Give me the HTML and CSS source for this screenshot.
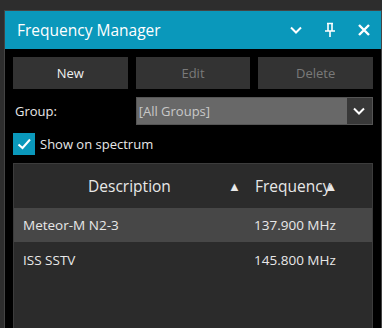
FILE: index.html
```html
<!DOCTYPE html>
<html lang="en">

<head>
    <meta charset="UTF-8">
    <title>Frequency Manager</title>
    <link rel="stylesheet" href="styles.css">
</head>

<body>
    <div class="panel">
        <div class="titlebar">
            <span class="title">Frequency Manager</span>
            <div class="title-icons">
                <svg width="14" height="14" viewBox="0 0 14 14"><path d="M2 4.5 L7 9.5 L12 4.5" fill="none" stroke="#fff" stroke-width="2"/></svg>
                <svg width="14" height="16" viewBox="0 0 14 16"><path d="M4 1.5 H10 M5 1.5 V9 M9 1.5 V9 M2 9 H12 M7 9 V15" fill="none" stroke="#fff" stroke-width="1.6"/></svg>
                <svg width="14" height="14" viewBox="0 0 14 14"><path d="M2 2 L12 12 M12 2 L2 12" fill="none" stroke="#fff" stroke-width="2.4"/></svg>
            </div>
        </div>
        <div class="content">
            <div class="grid">
                <button class="btn">New</button>
                <button class="btn" disabled>Edit</button>
                <button class="btn" disabled>Delete</button>

                <label class="group-label">Group:</label>
                <div class="select">
                    <span class="select-value">[All Groups]</span>
                    <span class="select-arrow">
                        <svg width="14" height="14" viewBox="0 0 14 14"><path d="M2 4.5 L7 9.5 L12 4.5" fill="none" stroke="#fff" stroke-width="2"/></svg>
                    </span>
                </div>
            </div>

            <div class="check-row">
                <span class="checkbox">
                    <svg width="18" height="18" viewBox="0 0 18 18"><path d="M3.5 9.5 L7.5 13 L15 4.5" fill="none" stroke="#fff" stroke-width="2"/></svg>
                </span>
                <span>Show on spectrum</span>
            </div>

            <div class="list">
                <div class="list-head">
                    <div class="col-desc">Description</div>
                    <div class="sort">&#9650;</div>
                    <div class="col-freq">Frequency<span class="sort2">&#9650;</span></div>
                </div>
                <div class="list-row selected">
                    <div class="cell-desc">Meteor-M N2-3</div>
                    <div class="cell-freq">137.900 MHz</div>
                </div>
                <div class="list-row">
                    <div class="cell-desc">ISS SSTV</div>
                    <div class="cell-freq">145.800 MHz</div>
                </div>
            </div>
        </div>
    </div>
</body>

</html>
```

FILE: styles.css
```css
* {
    box-sizing: border-box;
}

body {
    font-family: "Open Sans", "Noto Sans", sans-serif;
    margin: 0;
    padding: 10px 0 0 4px;
    background-color: #2d2d2d;
    color: #e8e8e8;
    height: 328px;
    overflow: hidden;
}

.panel {
    width: 378px;
    height: 318px;
    border: 1px solid #444;
    border-bottom: none;
    background-color: #000;
    display: flex;
    flex-direction: column;
}

.titlebar {
    height: 38px;
    background-color: #0a98bb;
    display: flex;
    align-items: center;
    padding: 0 10px 0 12px;
    color: #fff;
}

.title {
    font-size: 15.5px;
    flex: 1;
}

.title-icons {
    display: flex;
    align-items: center;
    gap: 20px;
}

.title-icons svg {
    display: block;
}

.content {
    flex: 1;
    padding: 8px 8px 0 8px;
    display: flex;
    flex-direction: column;
    gap: 8px;
}

.grid {
    display: grid;
    grid-template-columns: 1fr 1fr 1fr;
    grid-template-rows: 32px 28px;
    gap: 8px;
}

.btn {
    background-color: #333;
    border: none;
    color: #f0f0f0;
    font-family: inherit;
    font-size: 13px;
    padding: 0;
}

.btn:disabled {
    color: #7a7a7a;
}

.group-label {
    font-size: 13px;
    display: flex;
    align-items: center;
    padding-left: 2px;
}

.select {
    grid-column: 2 / 4;
    display: flex;
    background-color: #686868;
    border: 1px solid #555;
}

.select-value {
    flex: 1;
    font-size: 13px;
    color: #c8c8c8;
    display: flex;
    align-items: center;
    padding-left: 2px;
}

.select-arrow {
    width: 25px;
    background-color: #383838;
    display: flex;
    align-items: center;
    justify-content: center;
}

.check-row {
    height: 22px;
    display: flex;
    align-items: center;
    gap: 5px;
    font-size: 13px;
}

.checkbox {
    width: 22px;
    height: 22px;
    background-color: #0a98bb;
    display: flex;
    align-items: center;
    justify-content: center;
}

.list {
    flex: 1;
    background-color: #2b2b2b;
    border: 1px solid #3c3c3c;
    border-bottom: none;
    font-size: 13.5px;
}

.list-head {
    height: 43px;
    display: flex;
    align-items: center;
    font-size: 15.5px;
}

.col-desc {
    width: 211px;
    text-align: center;
    padding-left: 20px;
}

.sort {
    font-size: 13px;
    width: 30px;
    padding-left: 3px;
}

.col-freq {
    position: relative;
}

.sort2 {
    position: absolute;
    right: -7px;
    top: 2px;
    font-size: 13px;
}

.list-row {
    height: 35px;
    display: flex;
    align-items: center;
    border-top: 1px solid #2b2b2b;
}

.list-row.selected {
    background-color: #474747;
}

.cell-desc {
    width: 240px;
    padding-left: 9px;
}
```
